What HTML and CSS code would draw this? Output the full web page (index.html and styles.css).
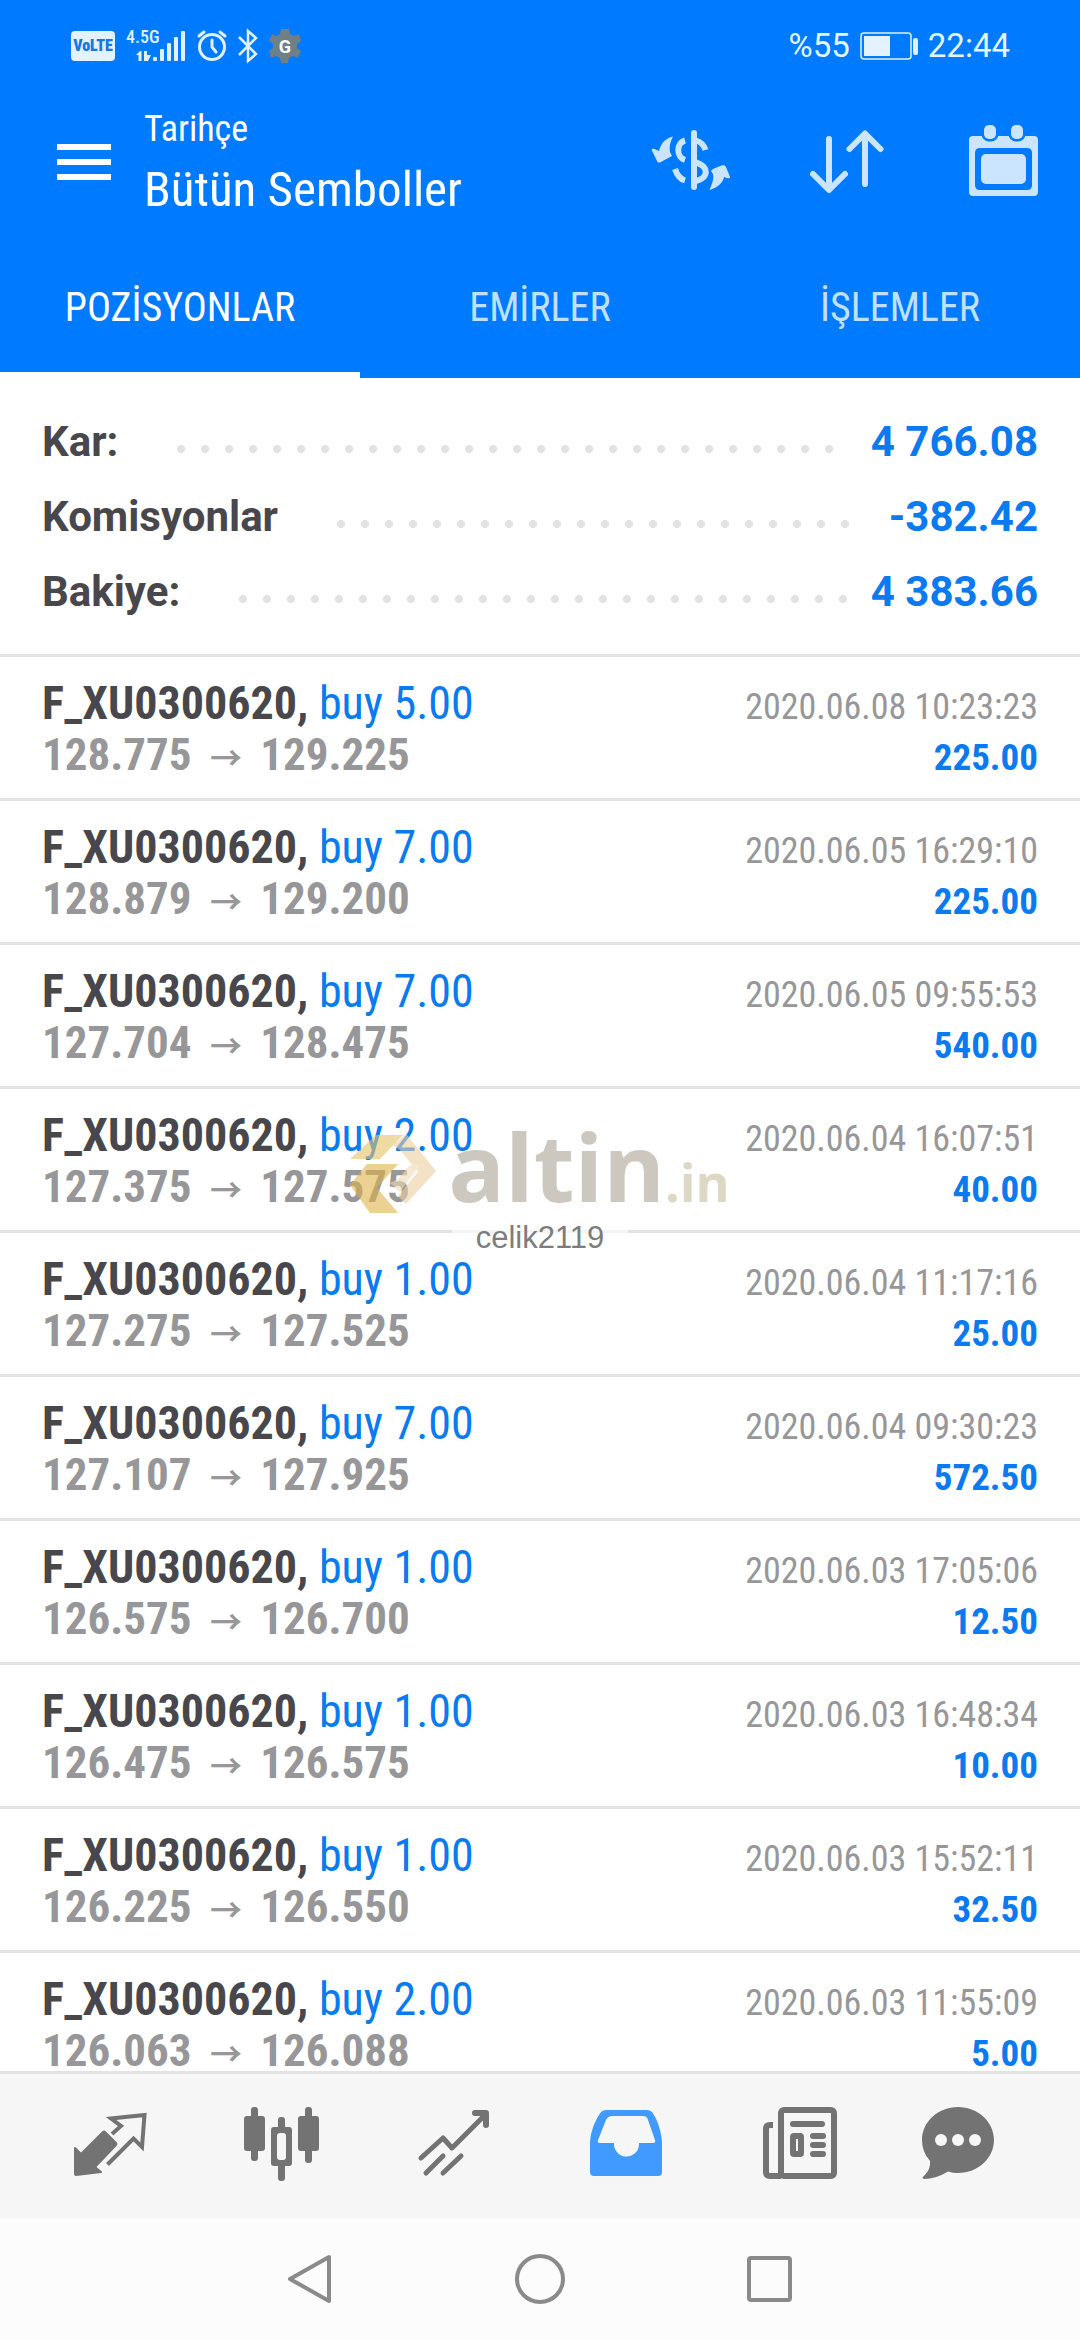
FILE: index.html
```html
<!DOCTYPE html>
<html lang="tr">
<head>
<meta charset="utf-8">
<meta name="viewport" content="width=device-width">
<title>Tarihçe</title>
<link rel="stylesheet" href="styles.css">
</head>
<body>
<header class="header">
  <div class="status">
    <div class="status-group">
      <span class="volte">VoLTE</span>
      <span class="signal">
        <span class="net">4.5G</span>
        <svg width="60" height="34" viewBox="0 0 60 34" fill="#dff0ff"><path d="M10 26l4-4h1.500v10h-3v-6zM18 22h3v4l4 0-3 6h-4z"/><rect x="27" y="28" width="4" height="4" rx="1"/><rect x="34" y="20" width="4" height="12" rx="1"/><rect x="41" y="14" width="4" height="18" rx="1"/><rect x="48" y="8" width="4" height="24" rx="1"/><rect x="55" y="2" width="4" height="30" rx="1"/></svg>
      </span>
      <svg width="30" height="34" viewBox="0 0 30 34" fill="none" stroke="#dff0ff" stroke-width="3" stroke-linecap="round"><circle cx="15" cy="18" r="12.500"/><path d="M15 11v7l4 5M2 7l5-4M28 7l-5-4"/></svg>
      <svg width="20" height="34" viewBox="0 0 20 34" fill="none" stroke="#dff0ff" stroke-width="2.500"><path d="M1 8l17 17-8 7V2l8 7L1 26"/></svg>
      <svg width="32" height="34" viewBox="0 0 32 34"><path fill="#6f7f86" d="M12 0h8l1 5 4 2 5-2 2 7-4 3v4l4 3-3 7-5-2-4 2-1 5h-7l-1-5-4-2-5 2-2-7 4-3v-4l-4-3 3-7 4 2 4-2z"/><text x="16" y="24" class="gear-letter">G</text></svg>
    </div>
    <div class="status-group">
      <span class="status-text">%55</span>
      <svg width="58" height="28" viewBox="0 0 58 28"><rect x="1" y="1" width="50" height="26" rx="3" fill="none" stroke="#dff0ff" stroke-width="1.500"/><rect x="4" y="4" width="26" height="20" fill="#e4f1ff"/><rect x="53" y="6" width="5" height="17" rx="2" fill="#dff0ff"/></svg>
      <span class="status-text">22:44</span>
    </div>
  </div>
  <div class="appbar">
    <button class="icon-button" aria-label="Menü"><svg width="54" height="36" viewBox="0 0 54 36" fill="#fff"><path d="M0 0h54v6H0zM0 15h54v6H0zM0 30h54v6H0z"/></svg></button>
    <div class="titles">
      <p class="subtitle">Tarihçe</p>
      <h1 class="title">Bütün Semboller</h1>
    </div>
    <div class="actions">
      <button class="icon-button" aria-label="Sembol"><svg width="80" height="68" viewBox="0 0 80 68" fill="none" stroke="#cce5ff" stroke-width="6"><path stroke-linecap="round" d="M43 5v54"/><path d="M34 12.500C25 15 25 29 34 32M45 12.500C50 14 53 17 54.500 22M24 41C26 47 29 51 34 52.500M45 34.500C58 38 58 50 45 53"/><path fill="#cce5ff" stroke="none" d="M22 8.500C19 14 18 19 19 24l2 4L9 34.500Q7 35 6 33L.7 22q0-2 3-1L8 23C10 15 15 10 22 8.500zM58.500 62C61 56 63 51 62 46l-2-3q0-2 12-6 2 0 3 2l4 10q0 2-3 1l-3-1C72 55 66 60 58.500 62z"/></svg></button>
      <button class="icon-button" aria-label="Sırala"><svg width="82" height="74" viewBox="2 0 82 74" fill="none" stroke="#cce5ff" stroke-width="6" stroke-linecap="round" stroke-linejoin="round"><path d="M23 14v50M7 49l16 16 16-16M59 9v50M43.500 24L59 8.500 74.500 24"/></svg></button>
      <button class="icon-button" aria-label="Tarih"><svg width="74" height="78" viewBox="0 0 74 78" fill="#cce5ff"><path fill-rule="evenodd" d="M6 13h61q4 0 4 4v52q0 4-4 4H6q-4 0-4-4V17q0-4 4-4zM13 25q-5 0-5 5v32q0 5 5 5h47q5 0 5-5V30q0-5-5-5z"/><rect x="14" y="31" width="45" height="30" rx="5"/><g stroke="#007aff" stroke-width="5" paint-order="stroke"><rect x="17" y="2" width="12" height="14" rx="5"/><rect x="44" y="2" width="12" height="14" rx="5"/></g></svg></button>
    </div>
  </div>
  <div class="tabs" role="tablist">
    <button class="tab tab-active" role="tab" aria-selected="true">POZİSYONLAR</button>
    <button class="tab" role="tab" aria-selected="false">EMİRLER</button>
    <button class="tab" role="tab" aria-selected="false">İŞLEMLER</button>
  </div>
</header>
<main class="content">
  <dl class="summary">
    <div class="summary-row"><dt>Kar:</dt><dd>4 766.08</dd></div>
    <div class="summary-row"><dt>Komisyonlar</dt><dd>-382.42</dd></div>
    <div class="summary-row"><dt>Bakiye:</dt><dd>4 383.66</dd></div>
  </dl>
  <ul class="deals">
    <li class="deal"><div class="line"><span class="symbol">F_XU0300620, <span class="side">buy 5.00</span></span><time class="date">2020.06.08 10:23:23</time></div><div class="line"><span class="price">128.775 <span class="arrow">→</span> 129.225</span><span class="profit">225.00</span></div></li>
    <li class="deal"><div class="line"><span class="symbol">F_XU0300620, <span class="side">buy 7.00</span></span><time class="date">2020.06.05 16:29:10</time></div><div class="line"><span class="price">128.879 <span class="arrow">→</span> 129.200</span><span class="profit">225.00</span></div></li>
    <li class="deal"><div class="line"><span class="symbol">F_XU0300620, <span class="side">buy 7.00</span></span><time class="date">2020.06.05 09:55:53</time></div><div class="line"><span class="price">127.704 <span class="arrow">→</span> 128.475</span><span class="profit">540.00</span></div></li>
    <li class="deal"><div class="line"><span class="symbol">F_XU0300620, <span class="side">buy 2.00</span></span><time class="date">2020.06.04 16:07:51</time></div><div class="line"><span class="price">127.375 <span class="arrow">→</span> 127.575</span><span class="profit">40.00</span></div></li>
    <li class="deal"><div class="line"><span class="symbol">F_XU0300620, <span class="side">buy 1.00</span></span><time class="date">2020.06.04 11:17:16</time></div><div class="line"><span class="price">127.275 <span class="arrow">→</span> 127.525</span><span class="profit">25.00</span></div></li>
    <li class="deal"><div class="line"><span class="symbol">F_XU0300620, <span class="side">buy 7.00</span></span><time class="date">2020.06.04 09:30:23</time></div><div class="line"><span class="price">127.107 <span class="arrow">→</span> 127.925</span><span class="profit">572.50</span></div></li>
    <li class="deal"><div class="line"><span class="symbol">F_XU0300620, <span class="side">buy 1.00</span></span><time class="date">2020.06.03 17:05:06</time></div><div class="line"><span class="price">126.575 <span class="arrow">→</span> 126.700</span><span class="profit">12.50</span></div></li>
    <li class="deal"><div class="line"><span class="symbol">F_XU0300620, <span class="side">buy 1.00</span></span><time class="date">2020.06.03 16:48:34</time></div><div class="line"><span class="price">126.475 <span class="arrow">→</span> 126.575</span><span class="profit">10.00</span></div></li>
    <li class="deal"><div class="line"><span class="symbol">F_XU0300620, <span class="side">buy 1.00</span></span><time class="date">2020.06.03 15:52:11</time></div><div class="line"><span class="price">126.225 <span class="arrow">→</span> 126.550</span><span class="profit">32.50</span></div></li>
    <li class="deal"><div class="line"><span class="symbol">F_XU0300620, <span class="side">buy 2.00</span></span><time class="date">2020.06.03 11:55:09</time></div><div class="line"><span class="price">126.063 <span class="arrow">→</span> 126.088</span><span class="profit">5.00</span></div></li>
  </ul>
</main>
<nav class="bottom-bar">
  <button class="icon-button" aria-label="Fiyatlar"><svg width="80" height="80" viewBox="0 0 80 80" stroke="#737373" stroke-linejoin="round"><path fill="#737373" stroke-width="2" d="M5 42l6 6 22-22q1-1 2 0l11 11q1 1 0 2L25 61l6 5-25 3q-1 0-1-1z"/><path fill="none" stroke-width="4" stroke-linejoin="miter" d="M42 28l9-8-10-7.500 33.500-3.500L72 41l-8.500-8.500-26 26"/></svg></button>
  <button class="icon-button" aria-label="Grafik"><svg width="80" height="80" viewBox="0 0 80 80" fill="#737373"><rect x="2" y="10" width="21" height="35" rx="3"/><rect x="9" y="1" width="7" height="54" rx="3"/><rect x="56" y="10" width="21" height="35" rx="3"/><rect x="63" y="1" width="7" height="56" rx="3"/><rect x="36" y="11" width="7" height="14" rx="3"/><rect x="36" y="57" width="7" height="18" rx="3"/><path fill-rule="evenodd" d="M32 21h15q3 0 3 3v33q0 3-3 3H32q-3 0-3-3V24q0-3 3-3zM38 27q-3 0-3 3v21q0 3 3 3h3q3 0 3-3V30q0-3-3-3z"/></svg></button>
  <button class="icon-button" aria-label="İşlem"><svg width="80" height="80" viewBox="0 0 80 80" fill="none" stroke="#737373" stroke-width="6" stroke-linejoin="round" stroke-linecap="round"><path stroke-width="5" d="M7 52l22-20 9 10L71 9"/><path d="M61 7h11v12"/><path fill="#737373" stroke="none" d="M63 7h11v11z"/><path stroke-width="5" d="M12 67l17-17M29 67l18-17"/></svg></button>
  <button class="icon-button" aria-label="Tarihçe" aria-current="page"><svg width="80" height="80" viewBox="0 0 80 80" fill="#409aff"><path fill-rule="evenodd" d="M4 36C5 23 10 13 15 6Q17 4 20 4h41q3 0 5 2c5 7 9 17 10 30v30q0 4-4 4H8q-4 0-4-4zM26 10q-4 0-6 4l-8 20q-1 3 2 3h14a12.500 12.500 0 0 0 25 2v-2h14q3 0 2-3l-7-20q-1-4-5-4z"/></svg></button>
  <button class="icon-button" aria-label="Haberler"><svg width="80" height="80" viewBox="0 0 80 80" fill="none" stroke="#737373" stroke-width="6"><rect x="23" y="4" width="53" height="66" rx="3"/><path d="M15 19h-3q-4 0-4 4v43q0 4 4 4h11"/><path stroke-linecap="round" d="M35 18h29M55 30h10M55 39h10M55 48h10"/><rect x="35" y="30" width="8" height="18" rx="1"/></svg></button>
  <button class="icon-button" aria-label="Mesajlar"><svg width="80" height="80" viewBox="12 0 80 80" fill="#737373"><path d="M40 1c20 0 36 15 36 33S60 67 40 67q-5 0-10-1.500Q18 73 6 73q-3-1 0-3 7-7 6-15Q4 46 4 34C4 16 20 1 40 1z"/><g fill="#f6f6f6"><circle cx="23" cy="34" r="6"/><circle cx="40" cy="34" r="6"/><circle cx="57" cy="34" r="6"/></g></svg></button>
</nav>
<div class="system-nav">
  <button class="icon-button" aria-label="Geri"><svg width="52" height="52" viewBox="0 0 52 52" fill="none" stroke="#8a8a8a" stroke-width="4" stroke-linejoin="round"><path d="M6 26L45 4v44z"/></svg></button>
  <button class="icon-button" aria-label="Ana ekran"><svg width="52" height="52" viewBox="0 0 52 52" fill="none" stroke="#8a8a8a" stroke-width="4"><circle cx="26" cy="26" r="23"/></svg></button>
  <button class="icon-button" aria-label="Son uygulamalar"><svg width="52" height="52" viewBox="0 0 52 52" fill="none" stroke="#8a8a8a" stroke-width="4"><rect x="5" y="5" width="41" height="42" rx="2"/></svg></button>
</div>
<div class="watermark">
  <div class="brand">
    <svg width="86" height="80" viewBox="0 0 86 80"><path fill="#e6c464" d="M26 1h27L30 25H0z"/><path fill="#deb34a" d="M17 30h31L27 54l21 25H20L0 51z"/><path fill="#ecd0a0" d="M55 1h2l29 36-30 33-8-8 20-24-18-22-7-5z"/><path fill="#f0dcb8" d="M48 45l12-14h10L50 58l-10-9z"/></svg>
    <span class="brand-name">altin</span><span class="brand-tld">.in</span>
  </div>
  <span class="user">celik2119</span>
</div>
</body>
</html>
```
FILE: styles.css
```css
* { box-sizing: border-box; }

body {
  margin: 0;
  height: 100vh;
  display: flex;
  flex-direction: column;
  position: relative;
  background: #fff;
  color: #48474c;
  font-family: "Roboto Condensed", Roboto, sans-serif;
}

p, h1, dl, dd, ul { margin: 0; padding: 0; }
svg { display: block; overflow: visible; }
button {
  margin: 0;
  padding: 0;
  border: 0;
  background: none;
  font: inherit;
  color: inherit;
}

/* Header */
.header { background: #007aff; color: #fff; }

.status {
  display: flex;
  justify-content: space-between;
  align-items: center;
  height: 90px;
  padding: 2px 70px 0 71px;
}
.status-group { display: flex; align-items: center; gap: 10px; }
.status-group:first-child { gap: 11px; }
.status-text { font: 400 33px/40px Roboto, sans-serif; color: #e4f6ff; }
.volte {
  width: 44px;
  border-radius: 4px;
  background: #e4f1ff;
  color: #1479e0;
  font-size: 16px;
  font-weight: 900;
  line-height: 30px;
  text-align: center;
}
.signal { position: relative; }
.net {
  position: absolute;
  top: 0;
  left: 0;
  font-size: 18px;
  font-weight: 500;
  line-height: 16px;
  color: #dff0ff;
}
.gear-letter { font: 700 18px Roboto, sans-serif; fill: #fff; text-anchor: middle; }

.appbar {
  display: flex;
  align-items: center;
  height: 144px;
  padding: 0 39px 0 57px;
}
.titles { flex: 1; padding: 1px 0 0 33px; }
.subtitle { font-size: 36px; line-height: 55px; }
.title { font-size: 49px; font-weight: 400; line-height: 66px; }
.actions { display: flex; align-items: center; gap: 77px; }

.tabs { display: flex; height: 144px; }
.tab {
  flex: 1;
  padding-top: 9px;
  border-bottom: 6px solid transparent;
  font-size: 40px;
  color: #bfe0ff;
}
.tab-active { color: #fff; border-color: #fff; }

/* Totals */
.content { flex: 1; min-height: 0; overflow: hidden; }

.summary {
  padding: 26px 42px 25px;
  border-bottom: 3px solid #e3e3e3;
  font-family: Roboto, sans-serif;
  font-size: 42px;
  font-weight: 700;
  line-height: 75px;
}
.summary-row { display: flex; align-items: center; }
.summary-row::before {
  content: "";
  order: 1;
  flex: 1;
  height: 8px;
  margin: 14px 24px 0 51px;
  background: radial-gradient(circle at center, #e3e3e3 0 4px, transparent 4px) 0 0 / 24px 8px repeat-x;
}
.summary dd { order: 2; color: #0a7af0; }

/* Deals */
.deals { list-style: none; }
.deal { padding: 21px 42px 18px; border-bottom: 3px solid #e3e3e3; }
.line {
  display: flex;
  justify-content: space-between;
  align-items: baseline;
  line-height: 51px;
}
.symbol { font-size: 46px; font-weight: 700; }
.side { font-weight: 400; color: #0a7af0; }
.price { font-size: 45px; font-weight: 700; color: #979799; }
.arrow {
  margin: 0 8px;
  font-family: "Noto Sans CJK JP", sans-serif;
  font-size: 32px;
  line-height: 32px;
}
.date { font-size: 36px; line-height: 44px; color: #979799; }
.profit { font-size: 37px; font-weight: 700; line-height: 44px; color: #0a7af0; }

/* Bottom navigation */
.bottom-bar {
  display: flex;
  height: 147px;
  padding: 0 24px;
  border-top: 3px solid #e3e3e3;
  background: #f6f6f6;
}
.bottom-bar .icon-button,
.system-nav .icon-button { flex: 1; display: grid; place-items: center; }
.system-nav {
  display: flex;
  height: 122px;
  padding: 0 195px;
  background: #fcfcfc;
}

/* Watermark laid over the list */
.watermark {
  position: absolute;
  inset: 0;
  display: flex;
  flex-direction: column;
  align-items: center;
  justify-content: center;
  gap: 4px;
  padding-top: 36px;
  pointer-events: none;
}
.brand {
  display: flex;
  align-items: baseline;
  font-family: "Open Sans", sans-serif;
  font-weight: 700;
  line-height: 96px;
}
.brand svg { align-self: flex-end; margin-right: 12px; opacity: 0.6; }
.brand-name { font-size: 94px; color: rgba(144, 132, 112, 0.45); }
.brand-tld { font-size: 52px; line-height: 52px; color: rgba(180, 168, 128, 0.45); }
.user {
  padding: 0 24px;
  background: rgba(255, 255, 255, 0.6);
  font: 400 31px/40px "Liberation Sans", sans-serif;
  color: #7c7c7c;
}
```
